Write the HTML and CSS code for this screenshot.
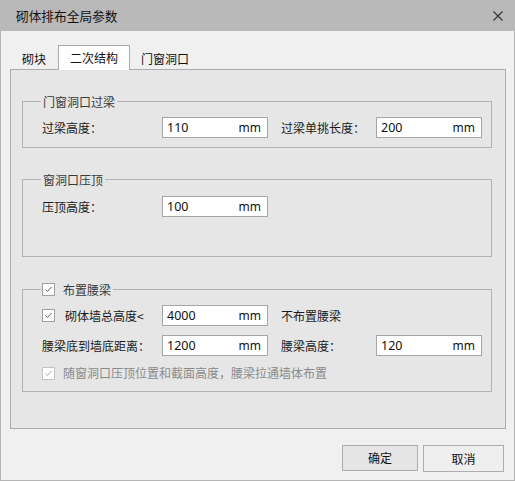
FILE: index.html
```
<!DOCTYPE html>
<html lang="zh-CN">
<head>
<meta charset="utf-8">
<title>砌体排布全局参数</title>
<link rel="stylesheet" href="styles.css">
</head>
<body>
<div class="window">
  <div class="titlebar">
    <span class="title">砌体排布全局参数</span>
    <svg class="close" width="10" height="10" viewBox="0 0 10 10"><path d="M0.5 0.5 L9.5 9.5 M9.5 0.5 L0.5 9.5" stroke="#333" stroke-width="1.1" fill="none"/></svg>
  </div>
  <div class="body">
    <div class="tabs">
      <div class="tab">砌块</div>
      <div class="tab active">二次结构</div>
      <div class="tab last">门窗洞口</div>
    </div>
    <div class="panel">
      <fieldset class="group g1">
        <legend>门窗洞口过梁</legend>
        <div class="row">
          <span class="label w1">过梁高度：</span>
          <div class="field"><span class="val">110</span><span class="unit">mm</span></div>
          <span class="label w2">过梁单挑长度：</span>
          <div class="field"><span class="val">200</span><span class="unit">mm</span></div>
        </div>
      </fieldset>
      <fieldset class="group g2">
        <legend>窗洞口压顶</legend>
        <div class="row">
          <span class="label w1">压顶高度：</span>
          <div class="field"><span class="val">100</span><span class="unit">mm</span></div>
        </div>
      </fieldset>
      <fieldset class="group g3">
        <legend class="check-legend"><span class="cb"><svg width="11" height="11" viewBox="0 0 11 11"><polyline points="2.5,5.5 4.5,7.5 8.5,3" fill="none" stroke="#5a5a5a" stroke-width="1"/></svg></span><span class="legend-text">布置腰梁</span></legend>
        <div class="row">
          <span class="label w1"><span class="cb"><svg width="11" height="11" viewBox="0 0 11 11"><polyline points="2.5,5.5 4.5,7.5 8.5,3" fill="none" stroke="#5a5a5a" stroke-width="1"/></svg></span><span class="cb-text">砌体墙总高度&lt;</span></span>
          <div class="field"><span class="val">4000</span><span class="unit">mm</span></div>
          <span class="label w2 plain">不布置腰梁</span>
        </div>
        <div class="row r2">
          <span class="label w1">腰梁底到墙底距离：</span>
          <div class="field"><span class="val">1200</span><span class="unit">mm</span></div>
          <span class="label w2">腰梁高度：</span>
          <div class="field"><span class="val">120</span><span class="unit">mm</span></div>
        </div>
        <div class="row r3 disabled">
          <span class="cb cb-disabled"><svg width="11" height="11" viewBox="0 0 11 11"><polyline points="2.5,5.5 4.5,7.5 8.5,3" fill="none" stroke="#a8a8a8" stroke-width="1"/></svg></span>
          <span class="dis-text">随窗洞口压顶位置和截面高度，腰梁拉通墙体布置</span>
        </div>
      </fieldset>
    </div>
    <div class="footer">
      <button class="btn ok">确定</button>
      <button class="btn cancel">取消</button>
    </div>
  </div>
</div>
</body>
</html>
```
FILE: styles.css
```
* { box-sizing: border-box; }
html, body { margin: 0; padding: 0; }
body {
  font-family: "Noto Sans", "Noto Sans CJK SC", sans-serif;
  font-size: 12px;
  color: #1a1a1a;
  background: #f0f0f0;
}
.window {
  width: 515px;
  height: 481px;
  border: 1px solid #b4b4b4;
  border-top: 0;
  background: #f0f0f0;
  display: flex;
  flex-direction: column;
}
.titlebar {
  height: 31px;
  margin: 0 -1px;
  background: #b9b9b9;
  display: flex;
  align-items: center;
  justify-content: space-between;
  padding: 0 12px 0 16px;
}
.title {
  font-family: "Noto Sans CJK SC", sans-serif;
  font-size: 12.7px;
  line-height: 16px;
  color: #111;
}
.close { display: block; margin-top: 0; }
.body {
  flex: 1;
  padding: 14px 8px 0 9px;
  display: flex;
  flex-direction: column;
}
.tabs {
  display: flex;
  align-items: flex-end;
  height: 24px;
  position: relative;
  z-index: 1;
}
.tab {
  height: 21px;
  line-height: 20px;
  padding: 0 11px;
  border: 1px solid transparent;
  border-bottom: 0;
  color: #111;
  font-family: "Noto Sans CJK SC", sans-serif;
}
.tab.active {
  height: 25px;
  line-height: 24px;
  margin-bottom: -1px;
  background: #ffffff;
  border-color: #acacac;
  padding: 0 11px 0 11px;
}
.tab.last { padding-left: 10px; }
.panel {
  width: 496px;
  height: 360px;
  border: 1px solid #acacac;
  background: #e6e6e6;
  padding: 23px 0 0 11px;
}
.group {
  width: 470px;
  margin: 0;
  border: 1px solid #b2b2b2;
  padding: 7px 0 9px 19px;
  min-width: 0;
}
.group legend {
  padding: 0 2px;
  margin-left: -1px;
  line-height: 17px;
  height: 17px;
  color: #3a3a3a;
  font-family: "Noto Sans CJK SC", sans-serif;
}
.g2 { margin-top: 23px; padding-top: 8px; padding-bottom: 39px; }
.g3 { margin-top: 24px; padding-top: 7px; padding-bottom: 10px; }
.group legend.check-legend {
  display: flex;
  align-items: center;
  padding: 0 2px 0 1px;
}
.legend-text { margin-left: 8px; }
.row {
  display: flex;
  align-items: center;
  height: 21px;
}
.r2 { margin-top: 9px; }
.r3 { margin-top: 9px; height: 16px; }
.label {
  font-family: "Noto Sans CJK SC", sans-serif;
  color: #1a1a1a;
  line-height: 16px;
  display: flex;
  align-items: center;
}
.w1 { width: 120px; }
.w2 { width: 95px; margin-left: 13px; }
.field {
  width: 106px;
  height: 21px;
  border: 1px solid #a6a6a6;
  background: #ffffff;
  display: flex;
  align-items: center;
  justify-content: space-between;
  padding: 0 6px 0 4px;
  line-height: 16px;
  color: #111;
}
.field .val { font-size: 12.5px; }
.cb {
  width: 13px;
  height: 13px;
  border: 1px solid #a0a0a0;
  background: #ffffff;
  display: flex;
  align-items: center;
  justify-content: center;
  flex: none;
}
.cb svg { display: block; }
.cb-text { margin-left: 10px; }
.cb-disabled { border-color: #c2c2c2; }
.dis-text {
  margin-left: 8px;
  color: #8a8a8a;
  font-family: "Noto Sans CJK SC", sans-serif;
  line-height: 16px;
}
.footer {
  display: flex;
  justify-content: flex-end;
  align-items: flex-start;
  padding-top: 16px;
  padding-right: 2px;
}
.btn {
  font-family: "Noto Sans CJK SC", sans-serif;
  font-size: 12px;
  color: #111;
  border: 1px solid #adadad;
  padding: 0;
  margin: 0;
  line-height: 16px;
}
.ok {
  width: 76px;
  height: 26px;
  background: #e5e5e5;
}
.cancel {
  width: 81px;
  height: 27px;
  margin-left: 5px;
  background: #efefef;
}
```
